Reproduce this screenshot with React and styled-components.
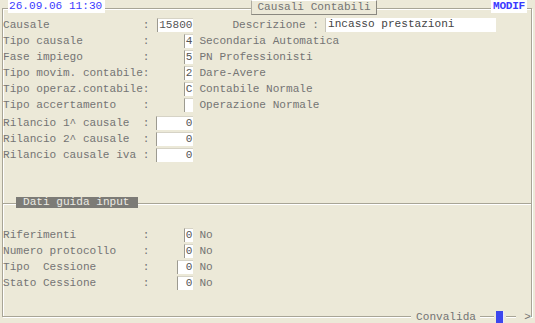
import React from "react";
import styled, { createGlobalStyle } from "styled-components";

const COLORS = {
  bg: "#ECE9D8",
  text: "#747474",
  blue: "#3a3aff",
  line: "#a8a596",
  field: "#ffffff",
};

const GlobalStyle = createGlobalStyle`
  html, body { margin: 0; padding: 0; background: ${COLORS.bg}; }
  body { font-family: "Liberation Mono", "DejaVu Sans Mono", monospace; font-size: 11.1px; color: ${COLORS.text}; }
`;

const topRows = [
  { label: "Causale", value: "15800", width: 36, desc: true },
  { label: "Tipo causale", value: "4", width: 9, text: "Secondaria Automatica" },
  { label: "Fase impiego", value: "5", width: 9, text: "PN Professionisti" },
  { label: "Tipo movim. contabile", value: "2", width: 9, text: "Dare-Avere" },
  { label: "Tipo operaz.contabile", value: "C", width: 9, text: "Contabile Normale" },
  { label: "Tipo accertamento", value: "", width: 9, text: "Operazione Normale" },
];

const rilancioRows = [
  { label: "Rilancio 1^ causale", value: "0", width: 37 },
  { label: "Rilancio 2^ causale", value: "0", width: 37 },
  { label: "Rilancio causale iva", value: "0", width: 37 },
];

const guidaRows = [
  { label: "Riferimenti", value: "0", width: 9, text: "No" },
  { label: "Numero protocollo", value: "0", width: 9, text: "No" },
  { label: "Tipo  Cessione", value: "0", width: 16, text: "No" },
  { label: "Stato Cessione", value: "0", width: 16, text: "No" },
];

const FieldRow = ({ row }) => (
  <Row>
    <Label>{row.label}</Label>
    <Colon>:</Colon>
    <FieldCell>
      <Field $width={row.width}>{row.value}</Field>
    </FieldCell>
    {row.text && <Hint>{row.text}</Hint>}
    {row.desc && (
      <>
        <DescLabel>Descrizione :</DescLabel>
        <DescField>incasso prestazioni</DescField>
      </>
    )}
  </Row>
);

const App = () => {
  return (
    <>
      <GlobalStyle />
      <Screen>
        <Frame>
          <TopBar>
            <DateBox>26.09.06 11:30</DateBox>
            <TitleTab>Causali Contabili</TitleTab>
            <Grow />
            <ModeBox>MODIF</ModeBox>
          </TopBar>

          <Group>
            {topRows.map((r) => (
              <FieldRow key={r.label} row={r} />
            ))}
          </Group>
          <Group $gap={2}>
            {rilancioRows.map((r) => (
              <FieldRow key={r.label} row={r} />
            ))}
          </Group>

          <Divider>
            <Rule $width={13} />
            <SectionTab>Dati guida input</SectionTab>
            <Rule />
          </Divider>

          <Group $gap={19}>
            {guidaRows.map((r) => (
              <FieldRow key={r.label} row={r} />
            ))}
          </Group>

          <Footer>
            <Grow />
            <FooterLabel>Convalida</FooterLabel>
            <Gap $width={14} />
            <MarkerWrap>
              <Marker />
            </MarkerWrap>
            <Gap $width={10} />
            <Arrow>&gt;</Arrow>
          </Footer>
        </Frame>
      </Screen>
    </>
  );
};

export default App;

const Screen = styled.div`
  width: 535px;
  height: 323px;
  box-sizing: border-box;
  padding: 8px 0 6px 2px;
  background: ${COLORS.bg};
  overflow: hidden;
`;

const Frame = styled.div`
  width: 530px;
  height: 309px;
  box-sizing: border-box;
  border: 1px solid ${COLORS.line};
  box-shadow: inset 1px 1px 0 #fff, 1px 1px 0 #fff;
  display: flex;
  flex-direction: column;
`;

const TopBar = styled.div`
  margin-top: -9px;
  height: 17px;
  display: flex;
  align-items: flex-start;
`;

const DateBox = styled.div`
  margin-left: 5px;
  width: 97px;
  height: 13px;
  line-height: 13px;
  padding-left: 1px;
  box-sizing: border-box;
  background: #fff;
  color: ${COLORS.blue};
  white-space: pre;
`;

const TitleTab = styled.div`
  margin-left: 146px;
  width: 126px;
  height: 15px;
  line-height: 13px;
  box-sizing: border-box;
  text-align: center;
  background: ${COLORS.bg};
  border: 1px solid;
  border-color: #fff #8a8880 #8a8880 #b0ada2;
  color: ${COLORS.text};
`;

const Grow = styled.div`
  flex: 1;
`;

const ModeBox = styled.div`
  width: 36px;
  height: 13px;
  line-height: 13px;
  margin-right: 4px;
  text-align: center;
  background: #fff;
  color: ${COLORS.blue};
  font-weight: bold;
  letter-spacing: -0.3px;
`;

const Group = styled.div`
  margin-top: ${(p) => p.$gap || 0}px;
  display: flex;
  flex-direction: column;
`;

const Row = styled.div`
  height: 16px;
  display: flex;
  align-items: center;
  white-space: pre;
`;

const Label = styled.div`
  width: 21ch;
`;

const Colon = styled.div`
  width: 1ch;
`;

const FieldCell = styled.div`
  width: 44px;
  display: flex;
  justify-content: flex-end;
`;

const Field = styled.div`
  width: ${(p) => p.$width}px;
  height: 14px;
  line-height: 13px;
  box-sizing: border-box;
  background: ${COLORS.field};
  border-left: 1px solid #9c9a90;
  border-top: 1px solid #d6d3c6;
  text-align: right;
  padding-right: 1px;
  color: #555;
`;

const Hint = styled.div`
  margin-left: 6px;
`;

const DescLabel = styled.div`
  margin-left: 39px;
`;

const DescField = styled.div`
  margin-left: 6px;
  width: 171px;
  height: 14px;
  line-height: 13px;
  box-sizing: border-box;
  padding-left: 2px;
  background: ${COLORS.field};
  border-left: 1px solid #c8c5b8;
  color: #444;
`;

const Divider = styled.div`
  margin-top: 34px;
  height: 11px;
  display: flex;
  align-items: flex-end;
`;

const Rule = styled.div`
  ${(p) => (p.$width ? `width: ${p.$width}px;` : "flex: 1;")}
  margin-bottom: 3px;
  border-top: 1px solid ${COLORS.line};
  border-bottom: 1px solid #fff;
`;

const SectionTab = styled.div`
  height: 11px;
  line-height: 11px;
  padding: 0 8px 0 7px;
  background: #7c7b76;
  color: #ecebe4;
`;

const Footer = styled.div`
  margin-top: auto;
  margin-bottom: -8px;
  height: 14px;
  display: flex;
  align-items: center;
`;

const FooterLabel = styled.div`
  padding: 0 4px 0 5px;
  background: ${COLORS.bg};
  line-height: 12px;
`;

const Gap = styled.div`
  width: ${(p) => p.$width}px;
`;

const MarkerWrap = styled.div`
  padding: 0 2px;
  height: 14px;
  background: ${COLORS.bg};
  display: flex;
  align-items: center;
`;

const Marker = styled.div`
  width: 8px;
  height: 13px;
  box-sizing: border-box;
  background: #3c46ee;
  border-right: 1px solid #e8e8ff;
`;

const Arrow = styled.div`
  width: 15px;
  text-align: right;
  background: ${COLORS.bg};
  line-height: 12px;
`;
